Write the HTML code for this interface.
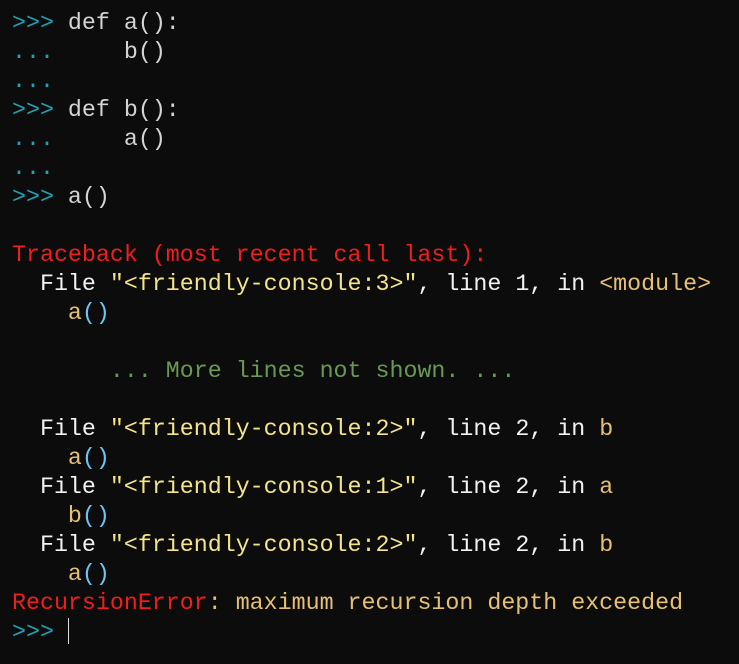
<!DOCTYPE html>
<html><head><meta charset="utf-8"><style>
html,body{margin:0;background:#0c0c0c;width:739px;height:664px;overflow:hidden}
pre{margin:0;padding:9px 0 0 12px;font-family:"Liberation Mono","DejaVu Sans Mono",monospace;font-size:23.3px;line-height:29px;color:#d4d4d4;white-space:pre}
.p{color:#1fa3b5}.r{color:#f21d1d}.w{color:#f2f2f2}.y{color:#f5e58a}.o{color:#e8c072}.b{color:#6cc5f2}.g{color:#6a9955}
.c{display:inline-block;width:1px;height:26px;background:#e0e0e0;vertical-align:-6px}
</style></head><body><pre><span class="p">&gt;&gt;&gt;</span> def a():
<span class="p">...</span>     b()
<span class="p">...</span>
<span class="p">&gt;&gt;&gt;</span> def b():
<span class="p">...</span>     a()
<span class="p">...</span>
<span class="p">&gt;&gt;&gt;</span> a()

<span class="r">Traceback (most recent call last):</span>
  <span class="w">File </span><span class="y">"&lt;friendly-console:3&gt;"</span><span class="w">, line 1, in </span><span class="o">&lt;module&gt;</span>
    <span class="o">a</span><span class="b">()</span>

       <span class="g">... More lines not shown. ...</span>

  <span class="w">File </span><span class="y">"&lt;friendly-console:2&gt;"</span><span class="w">, line 2, in </span><span class="o">b</span>
    <span class="o">a</span><span class="b">()</span>
  <span class="w">File </span><span class="y">"&lt;friendly-console:1&gt;"</span><span class="w">, line 2, in </span><span class="o">a</span>
    <span class="o">b</span><span class="b">()</span>
  <span class="w">File </span><span class="y">"&lt;friendly-console:2&gt;"</span><span class="w">, line 2, in </span><span class="o">b</span>
    <span class="o">a</span><span class="b">()</span>
<span class="r">RecursionError</span><span class="o">: maximum recursion depth exceeded</span>
<span class="p">&gt;&gt;&gt;</span> <span class="c"></span></pre></body></html>
